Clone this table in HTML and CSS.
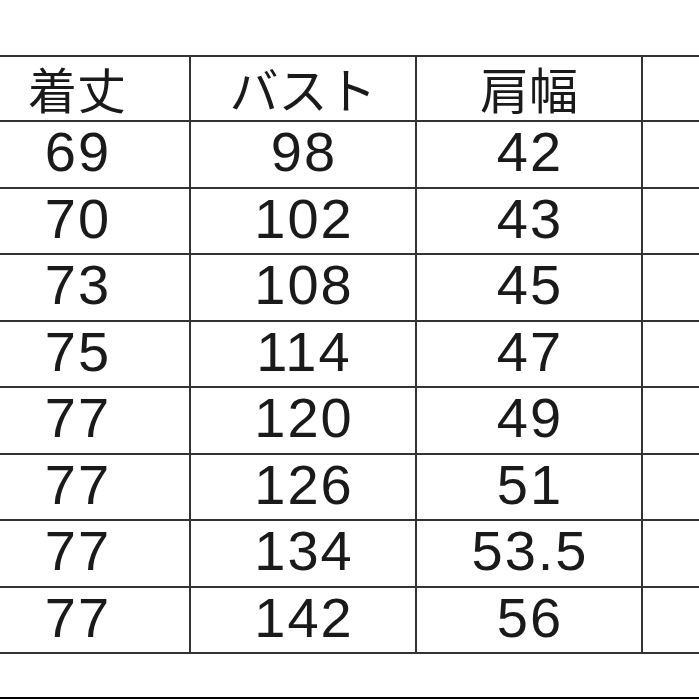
FILE: index.html
```html
<!DOCTYPE html>
<html lang="ja">
<head>
<meta charset="utf-8">
<link rel="stylesheet" href="styles.css">
</head>
<body>
<div class="page">
  <div class="grid">
    <div class="cell head">着丈</div><div class="cell head">バスト</div><div class="cell head">肩幅</div><div class="cell head"></div>
    <div class="cell">69</div><div class="cell">98</div><div class="cell">42</div><div class="cell"></div>
    <div class="cell">70</div><div class="cell">102</div><div class="cell">43</div><div class="cell"></div>
    <div class="cell">73</div><div class="cell">108</div><div class="cell">45</div><div class="cell"></div>
    <div class="cell">75</div><div class="cell">114</div><div class="cell">47</div><div class="cell"></div>
    <div class="cell">77</div><div class="cell">120</div><div class="cell">49</div><div class="cell"></div>
    <div class="cell">77</div><div class="cell">126</div><div class="cell">51</div><div class="cell"></div>
    <div class="cell">77</div><div class="cell">134</div><div class="cell">53.5</div><div class="cell"></div>
    <div class="cell">77</div><div class="cell">142</div><div class="cell">56</div><div class="cell"></div>
  </div>
  <div class="bar"></div>
</div>
</body>
</html>
```

FILE: styles.css
```css
html, body {
  margin: 0;
  padding: 0;
  background: #ffffff;
  overflow: hidden;
}
.page {
  width: 699px;
  height: 699px;
  overflow: hidden;
  padding-top: 55px;
  box-sizing: border-box;
  display: flex;
  flex-direction: column;
}
.grid {
  display: grid;
  grid-template-columns: repeat(4, 224px);
  grid-template-rows: 63px repeat(8, 64.5px);
  gap: 2px;
  padding: 2px;
  background: #333333;
  width: max-content;
  margin-left: -37px;
}
.cell {
  background: #ffffff;
  display: flex;
  align-items: center;
  justify-content: center;
  font-family: "Liberation Sans", Arial, sans-serif;
  font-size: 56px;
  letter-spacing: 2px;
  color: #1a1a1a;
  line-height: 1;
  padding-bottom: 4px;
  padding-left: 2px;
  box-sizing: border-box;
}
.cell.head {
  font-family: "Noto Sans CJK JP", "Noto Sans", sans-serif;
  font-size: 49px;
  font-weight: 400;
  letter-spacing: 0;
  padding-left: 0;
  padding-bottom: 2px;
}
.bar {
  margin-top: auto;
  height: 2px;
  background: #000000;
}
```
